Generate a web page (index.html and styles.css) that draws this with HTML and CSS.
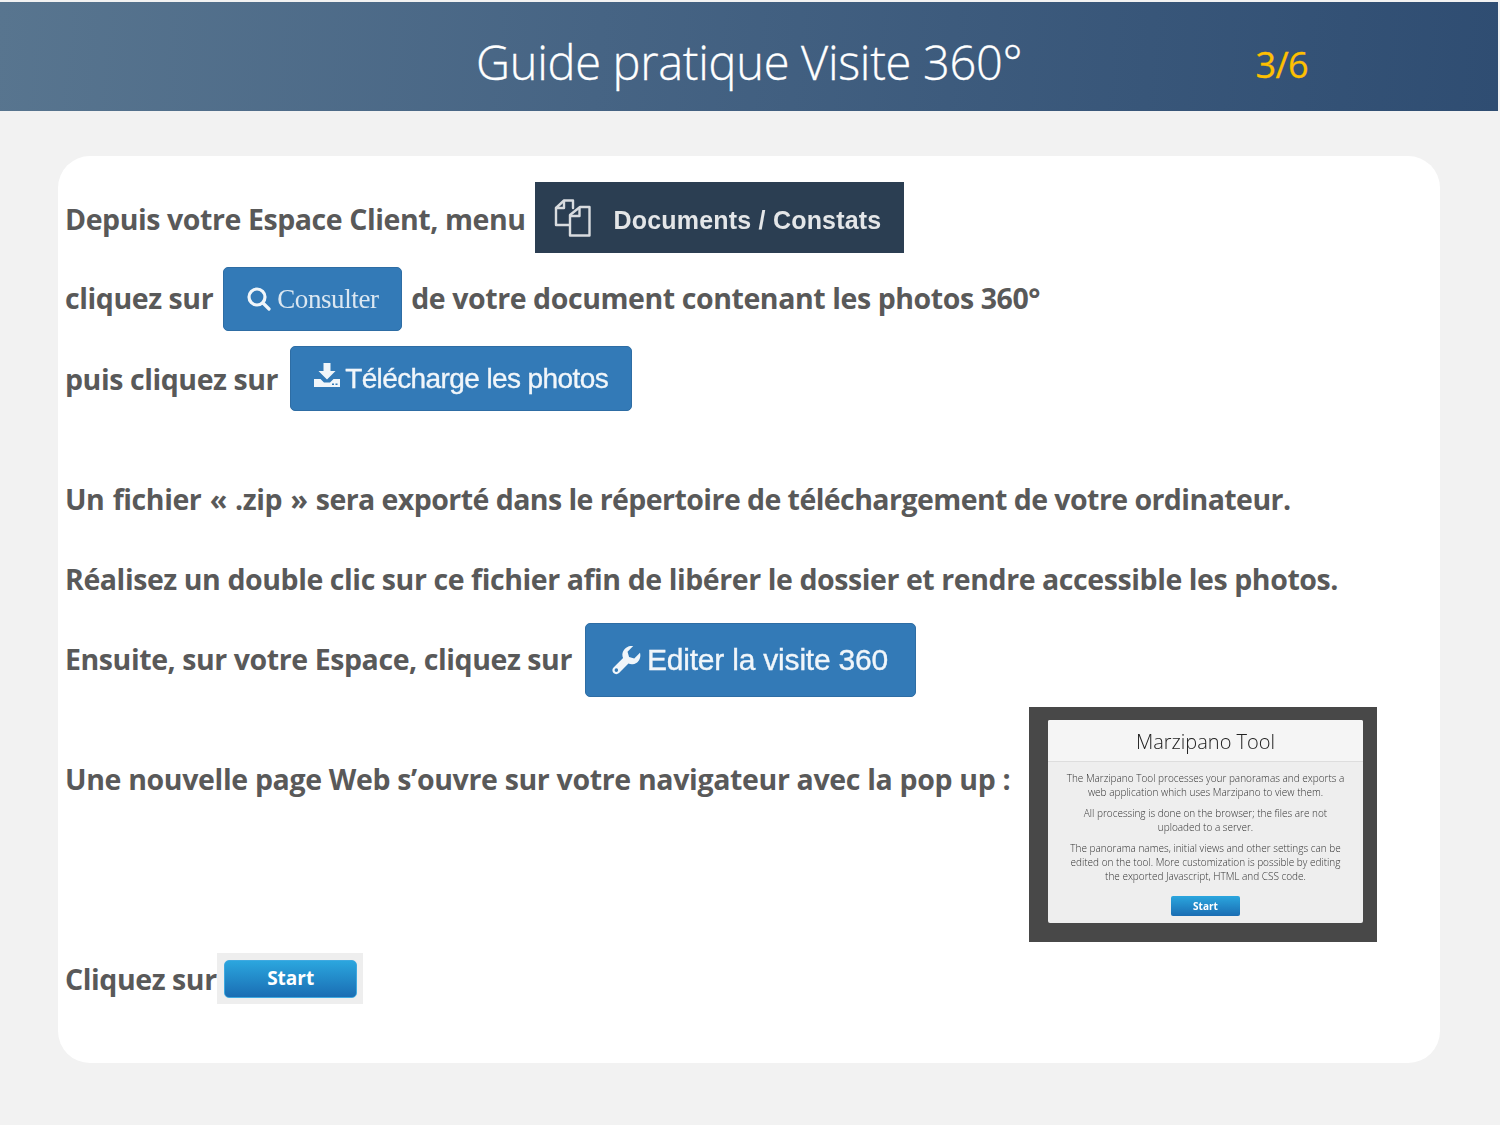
FILE: index.html
```html
<!DOCTYPE html>
<html lang="fr">
<head>
<meta charset="utf-8">
<title>Guide pratique Visite 360°</title>
<link rel="stylesheet" href="styles.css">
</head>
<body>
<header class="top">
  <h1 class="title">Guide pratique Visite 360°</h1>
  <span class="pager">3/6</span>
</header>
<main class="card">
  <div class="row r1">
    <span class="t-down">Depuis votre Espace Client, menu</span>
    <span class="menu">
      <svg class="menu-icon" viewBox="0 0 37 38" fill="none" stroke="#d9dcdf" stroke-width="2.4" stroke-linejoin="round" stroke-linecap="round">
        <path d="M19 9V1.5H10L2 9v17h13"/>
        <path d="M10 2v7H2"/>
        <path d="M26 8h9.5v28.500H16V16z"/>
        <path d="M25.500 9v8H17"/>
      </svg>
      <span class="menu-label">Documents / Constats</span>
    </span>
  </div>
  <div class="row r2">
    <span class="t-up">cliquez sur</span>
    <span class="btn btn-consult">
      <svg class="i-search" viewBox="0 0 24 24" fill="none" stroke="#f1f6fa" stroke-width="3.200" stroke-linecap="round">
        <circle cx="10" cy="10" r="8"/>
        <path d="M16 16l6 6"/>
      </svg>
      <span>Consulter</span>
    </span>
    <span class="t-up">de votre document contenant les photos 360°</span>
  </div>
  <div class="row r3">
    <span>puis cliquez sur</span>
    <span class="btn btn-dl">
      <svg class="i-dl" viewBox="0 0 26 24">
        <path fill="#f1f6fa" d="M9.500 0h7v8h5L13 16.500 4.500 8h5z"/>
        <path fill="#f1f6fa" d="M0 16h6.500l3.500 3.500h6l3.500-3.500H26v8H0z"/>
        <path fill="#337ab7" d="M18 20.500h2v1.500h-2zM21.500 20.500h2v1.500h-2z"/>
      </svg>
      <span>Télécharge les photos</span>
    </span>
  </div>
  <p class="row line r4"><span><span class="zip">Un fichier « .zip » </span>sera exporté dans le répertoire de téléchargement de votre ordinateur.</span></p>
  <p class="row line r5">Réalisez un double clic sur ce fichier afin de libérer le dossier et rendre accessible les photos.</p>
  <div class="row r6">
    <span class="t-up">Ensuite, sur votre Espace, cliquez sur</span>
    <span class="btn btn-edit">
      <svg class="i-wrench" viewBox="0 0 28 28">
        <path fill="#f1f6fa" fill-rule="evenodd" d="M27 6.500l-5.500 5.500-5-1.500-1.500-5L20.500 0C15.500-.8 10.500 3 10 8c-.1 1.500.2 2.700.7 3.700L1.500 20.800c-1.500 1.600-1.500 3.800 0 5.300s3.700 1.500 5.300 0l9.100-9.100c1.200.5 2.600.8 4.100.6C25.500 17 28.500 11.500 27 6.500zM4.200 25a1.700 1.700 0 1 1 0-3.400 1.700 1.700 0 0 1 0 3.400z"/>
      </svg>
      <span>Editer la visite 360</span>
    </span>
  </div>
  <div class="row r7">
    <span class="r7-text">Une nouvelle page Web s’ouvre sur votre navigateur avec la pop up :</span>
    <div class="shot">
      <div class="dialog">
        <div class="dialog-head">Marzipano Tool</div>
        <div class="dialog-body">
          <p>The Marzipano Tool processes your panoramas and exports a web application which uses Marzipano to view them.</p>
          <p>All processing is done on the browser; the files are not uploaded to a server.</p>
          <p>The panorama names, initial views and other settings can be edited on the tool. More customization is possible by editing the exported Javascript, HTML and CSS code.</p>
          <span class="mini-start">Start</span>
        </div>
      </div>
    </div>
  </div>
  <div class="row r8">
    <span>Cliquez sur</span>
    <span class="start-chip"><span class="start">Start</span></span>
  </div>
</main>
</body>
</html>
```
FILE: styles.css
```css
* { box-sizing: border-box; }
html, body { margin: 0; padding: 0; }
body {
  width: 1500px;
  height: 1125px;
  overflow: hidden;
  background: #f2f2f2;
  font-family: "Open Sans", sans-serif;
  color: #595959;
}
.top {
  margin: 2px 2px 0 0;
  height: 109px;
  background: linear-gradient(95deg, #58758f 0%, #466484 40%, #2f4d72 100%);
  display: flex;
  align-items: center;
  padding-left: 476px;
}
.title {
  margin: 10px 0 0;
  font-size: 47px;
  font-weight: 300;
  letter-spacing: -.3px;
  -webkit-text-stroke: .3px #fff;
  color: #fff;
  white-space: nowrap;
}
.pager {
  margin: 16px 0 0 233px;
  font-size: 36px;
  letter-spacing: -.6px;
  -webkit-text-stroke: .3px #ffc000;
  color: #ffc000;
}
.card {
  margin: 45px 60px 0 58px;
  height: 907px;
  padding: 26px 0 0 7px;
  background: #fff;
  border-radius: 32px;
}
.row {
  display: flex;
  align-items: center;
  margin: 0;
  font-size: 28.500px;
  font-weight: 700;
  letter-spacing: -.42px;
  line-height: 40px;
  white-space: nowrap;
}
.t-up { margin-bottom: 2px; }
.t-down { margin-top: 2px; }
.r1 { gap: 9px; height: 71px; }
.r2 { gap: 9px; height: 64px; margin-top: 14px; }
.r2 .btn { margin-left: 1px; }
.r3 { gap: 12px; height: 65px; margin-top: 15px; }
.r4 { margin-top: 68px; letter-spacing: -.56px; }
.zip { word-spacing: 1.300px; letter-spacing: -.42px; }
.r5 { margin-top: 40px; }
.r6 { gap: 13px; height: 74px; margin-top: 24px; }
.r7 { height: 235px; margin-top: 10px; align-items: flex-start; }
.r7-text { margin-top: 52px; width: 964px; letter-spacing: -.34px; }
.r8 { gap: 0; height: 51px; margin-top: 11px; }
.menu {
  display: flex;
  align-items: center;
  gap: 23px;
  width: 369px;
  height: 71px;
  padding-left: 19px;
  background: #2b3e52;
  color: #e4e6e8;
  font-family: "Liberation Sans", Arial, sans-serif;
  font-size: 25px;
  font-weight: 700;
  letter-spacing: .2px;
  filter: blur(.4px);
}
.menu-label { margin-top: 4px; }
.menu-icon { width: 37px; height: 38px; flex: none; }
.btn {
  display: flex;
  align-items: center;
  height: 100%;
  background: #337ab7;
  border: 1px solid #2e6da4;
  border-radius: 5px;
  color: #f1f6fa;
  font-family: "Liberation Sans", Arial, sans-serif;
  font-weight: 400;
  -webkit-text-stroke: .35px #f1f6fa;
  filter: blur(.4px);
}
.btn-consult {
  width: 179px;
  padding-left: 23px;
  gap: 6px;
  font-family: "Liberation Serif", "Times New Roman", serif;
  font-size: 27px;
  letter-spacing: -.4px;
  color: #dbe7f1;
  -webkit-text-stroke: 0;
}
.i-search { width: 24px; height: 24px; }
.btn-dl {
  width: 342px;
  padding-left: 23px;
  gap: 5px;
  font-size: 28px;
  letter-spacing: -.6px;
}
.i-dl { width: 26px; height: 24px; margin-top: -7px; }
.btn-edit {
  width: 331px;
  padding-left: 26px;
  gap: 6px;
  font-size: 30px;
  letter-spacing: -.2px;
}
.i-wrench { width: 29px; height: 29px; }
.shot {
  width: 348px;
  height: 235px;
  padding: 13px 14px 19px 19px;
  background: #484848;
  font-weight: 400;
  letter-spacing: 0;
  white-space: normal;
}
.dialog {
  height: 203px;
  background: #eee;
  border-radius: 2px;
  color: #333;
  text-align: center;
  filter: blur(.25px);
}
.dialog-head {
  height: 42px;
  background: #f5f5f5;
  border-bottom: 1px solid #ddd;
  border-radius: 2px 2px 0 0;
  font-size: 20px;
  font-weight: 300;
  line-height: 43px;
  color: #222;
}
.dialog-body {
  padding: 9px 16px 0;
  font-size: 10px;
  font-weight: 300;
  line-height: 14px;
}
.dialog-body p { margin: 0 0 7px; }
.mini-start {
  display: block;
  width: 69px;
  height: 20px;
  margin: 13px auto 0;
  border-radius: 2px;
  background: linear-gradient(#2ba6de, #1a6db3);
  color: #fff;
  font-size: 10px;
  font-weight: 700;
  line-height: 20px;
}
.start-chip {
  display: flex;
  align-items: center;
  justify-content: center;
  width: 146px;
  height: 51px;
  padding-left: 2px;
  background: #eee;
}
.start {
  width: 133px;
  height: 38px;
  border: 1px solid #3fa9e0;
  border-radius: 5px;
  background: linear-gradient(#2ba6de, #1a6db3);
  color: #fff;
  font-size: 19px;
  font-weight: 700;
  letter-spacing: 0;
  line-height: 34px;
  text-align: center;
}
```
